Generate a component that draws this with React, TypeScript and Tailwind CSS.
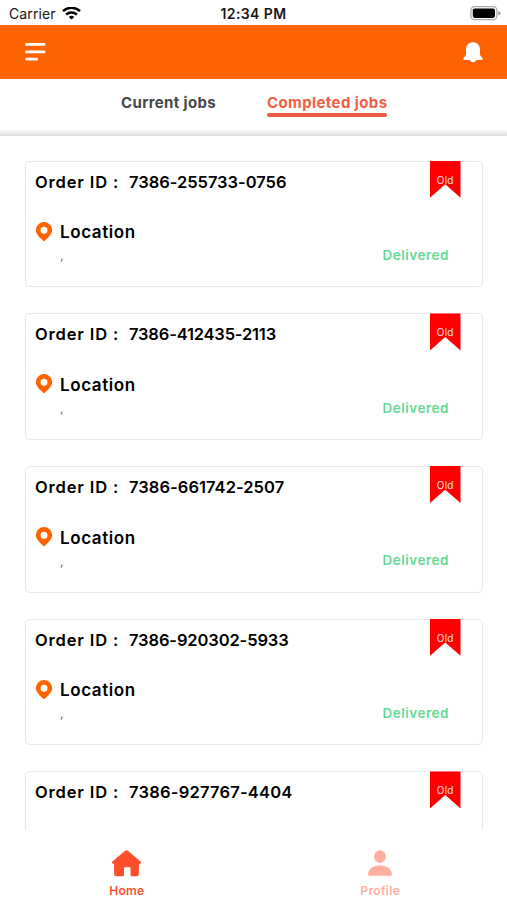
import React from "react";

type Job = { id: string; tracking: string };

const jobs: Job[] = [
  { id: "7386-255733-0756", tracking: "tracking-[-0.03px]" },
  { id: "7386-412435-2113", tracking: "tracking-[-0.18px]" },
  { id: "7386-661742-2507", tracking: "tracking-[0.05px]" },
  { id: "7386-920302-5933", tracking: "tracking-[-0.12px]" },
  { id: "7386-927767-4404", tracking: "tracking-[0.22px]" },
];

function StatusBar() {
  return (
    <div className="grid h-[25px] shrink-0 grid-cols-3 items-center pt-[2px] text-[#161616]">
      <div className="flex items-center gap-[6px] pl-[9px]">
        <span className="text-[14px] leading-none tracking-[0.1px]">Carrier</span>
        <svg className="h-[14px] w-[19px]" viewBox="0 0 19 14" fill="none" stroke="#000" strokeWidth="2.5">
          <path d="M1 4.200C5.700-.3 13.300-.3 18 4.200" />
          <path d="M4.100 7.700C7.100 4.900 11.900 4.900 14.900 7.700" />
          <path d="M9.500 12.600L6.800 9.900Q9.500 7.800 12.200 9.900Z" fill="#000" stroke="none" />
        </svg>
      </div>
      <span className="whitespace-nowrap text-center text-[14px] font-semibold leading-none tracking-[0.4px]">12:34 PM</span>
      <div className="flex justify-end pr-[6px]">
        <svg className="h-[15px] w-[31px]" viewBox="0 0 31 15">
          <rect x=".9" y=".7" width="26" height="13" rx="3.800" fill="#fff" stroke="#aaa" strokeWidth="1.300" />
          <rect x="2.800" y="2.500" width="22.200" height="9.400" rx="1.800" fill="#000" />
          <path d="M28.300 4.900Q30.600 5.600 30.600 7.200T28.300 9.500Z" fill="#999" />
        </svg>
      </div>
    </div>
  );
}

function Header() {
  return (
    <header className="flex h-[54px] shrink-0 items-center justify-between bg-[#ff6200] pl-[25px] pr-[24px]">
      <svg className="h-[20px] w-[21px]" viewBox="0 0 21 20" fill="#fff">
        <rect x=".3" y="1" width="20" height="2.700" rx=".5" />
        <rect x=".3" y="8.500" width="20" height="2.700" rx=".5" />
        <rect x=".3" y="15.800" width="12.500" height="2.700" rx=".5" />
      </svg>
      <svg className="h-[21px] w-[20px]" viewBox="0 0 20 21" fill="#fff">
        <path d="M10 .3C5.500.3 3 3.500 3 7.800V12Q3 14 1.200 15.200Q.3 15.900.3 16.800Q.3 17.900 1.600 17.900H6.800Q7.700 20.300 10 20.300T13.200 17.900H18.400Q19.700 17.900 19.700 16.800Q19.700 15.900 18.800 15.200Q17 14 17 12V7.800C17 3.500 14.500.3 10 .3Z" />
      </svg>
    </header>
  );
}

function Tabs() {
  return (
    <div className="flex h-[57px] shrink-0 flex-col">
      <div className="flex flex-1 items-start pl-[121px] pt-[15px] text-[15px] font-bold leading-[18px]">
        <span className="w-[146px] whitespace-nowrap tracking-[0.35px] text-[#484848]">Current jobs</span>
        <div className="w-[120px]">
          <span className="whitespace-nowrap tracking-[0.4px] text-[#ef5f42]">Completed jobs</span>
          <div className="mt-px h-[4px] rounded-full bg-[#e85d42]" />
        </div>
      </div>
      <div className="h-[7px] bg-linear-to-b from-white to-[#dedede]" />
    </div>
  );
}

function JobCard({ job }: { job: Job }) {
  return (
    <article className="relative h-[126.700px] shrink-0 rounded-[5px] border border-[#e7e7e7] bg-white pl-[9px] text-black">
      <div className="flex h-[40px] items-baseline text-[16.500px] font-semibold leading-[40px]">
        <span className="w-[94px] whitespace-nowrap tracking-[0.85px]">Order ID :</span>
        <span className={`whitespace-nowrap ${job.tracking}`}>{job.id}</span>
      </div>
      <div className="mt-[20px] flex h-[20px] items-center">
        <svg className="h-[20px] w-[18px]" viewBox="0 0 18 20">
          <path fillRule="evenodd" fill="#ff6200" d="M9 .1A8.200 8.200 0 0 0 .8 8.300C.8 12.500 5.800 16.600 9 19.400C12.200 16.600 17.200 12.500 17.200 8.300A8.200 8.200 0 0 0 9 .1ZM9 4.800A3.500 3.500 0 1 1 9 11.800A3.500 3.500 0 0 1 9 4.800Z" />
        </svg>
        <span className="ml-[7px] whitespace-nowrap pt-px text-[17px] font-semibold leading-[20px] tracking-[0.6px]">Location</span>
      </div>
      <div className="flex h-[28px] items-center justify-between pr-[33px] leading-none">
        <span className="pl-[25px] text-[13px] text-[#777]">,</span>
        <span className="whitespace-nowrap text-[13.500px] font-semibold tracking-[0.5px] text-[#65d996]">Delivered</span>
      </div>
      <div className="absolute -top-px right-[21.500px] h-[37px] w-[30.500px] bg-[#fe0000] pt-[13px] text-center text-[10px] leading-[12px] tracking-[0.3px] text-[#ffe0e0] [clip-path:polygon(0_0,100%_0,100%_100%,50%_64%,0_100%)]">
        Old
      </div>
    </article>
  );
}

function BottomNav() {
  return (
    <nav className="grid h-[70px] shrink-0 grid-cols-2 bg-white text-[12px] font-semibold leading-[14px]">
      <div className="flex flex-col items-center gap-[7px] pt-[20px] text-[#ff4e2e]">
        <svg className="h-[27px] w-[31px]" viewBox="0 0 31 27" fill="currentColor">
          <path d="M15.500.3Q16.500.3 17.500 1.200L29.600 11.500Q31 13 29.300 13.800H27.900V24Q27.900 26.200 25.700 26.200H20.700Q19.500 26.200 19.500 25V18.500Q19.500 17 18 17H14.500Q13 17 13 18.500V25Q13 26.200 11.800 26.200H5.300Q3.100 26.200 3.100 24V13.800H1.700Q0 13 1.400 11.500L13.500 1.200Q14.500.3 15.500.3Z" />
        </svg>
        <span className="tracking-[0.2px]">Home</span>
      </div>
      <div className="flex flex-col items-center gap-[7px] pt-[20px] text-[#ffaf9f]">
        <svg className="h-[27px] w-[26px]" viewBox="0 0 26 27" fill="currentColor">
          <ellipse cx="13" cy="6.600" rx="5.900" ry="6.300" />
          <path d="M1.200 23C2.700 17.500 7.200 15.400 13 15.400S23.300 17.500 24.800 23C25.400 25 24.600 25.700 23.500 25.700H2.500C1.400 25.700.6 25 1.200 23Z" />
        </svg>
        <span className="tracking-[0.3px]">Profile</span>
      </div>
    </nav>
  );
}

export default function App() {
  return (
    <div className="flex h-[900px] w-[507px] flex-col overflow-hidden bg-white font-[Inter,sans-serif]">
      <StatusBar />
      <Header />
      <Tabs />
      <main className="flex min-h-0 flex-1 flex-col gap-[26px] overflow-hidden pl-[25px] pr-[24px] pt-[24.700px]">
        {jobs.map((job) => (
          <JobCard key={job.id} job={job} />
        ))}
      </main>
      <BottomNav />
    </div>
  );
}
